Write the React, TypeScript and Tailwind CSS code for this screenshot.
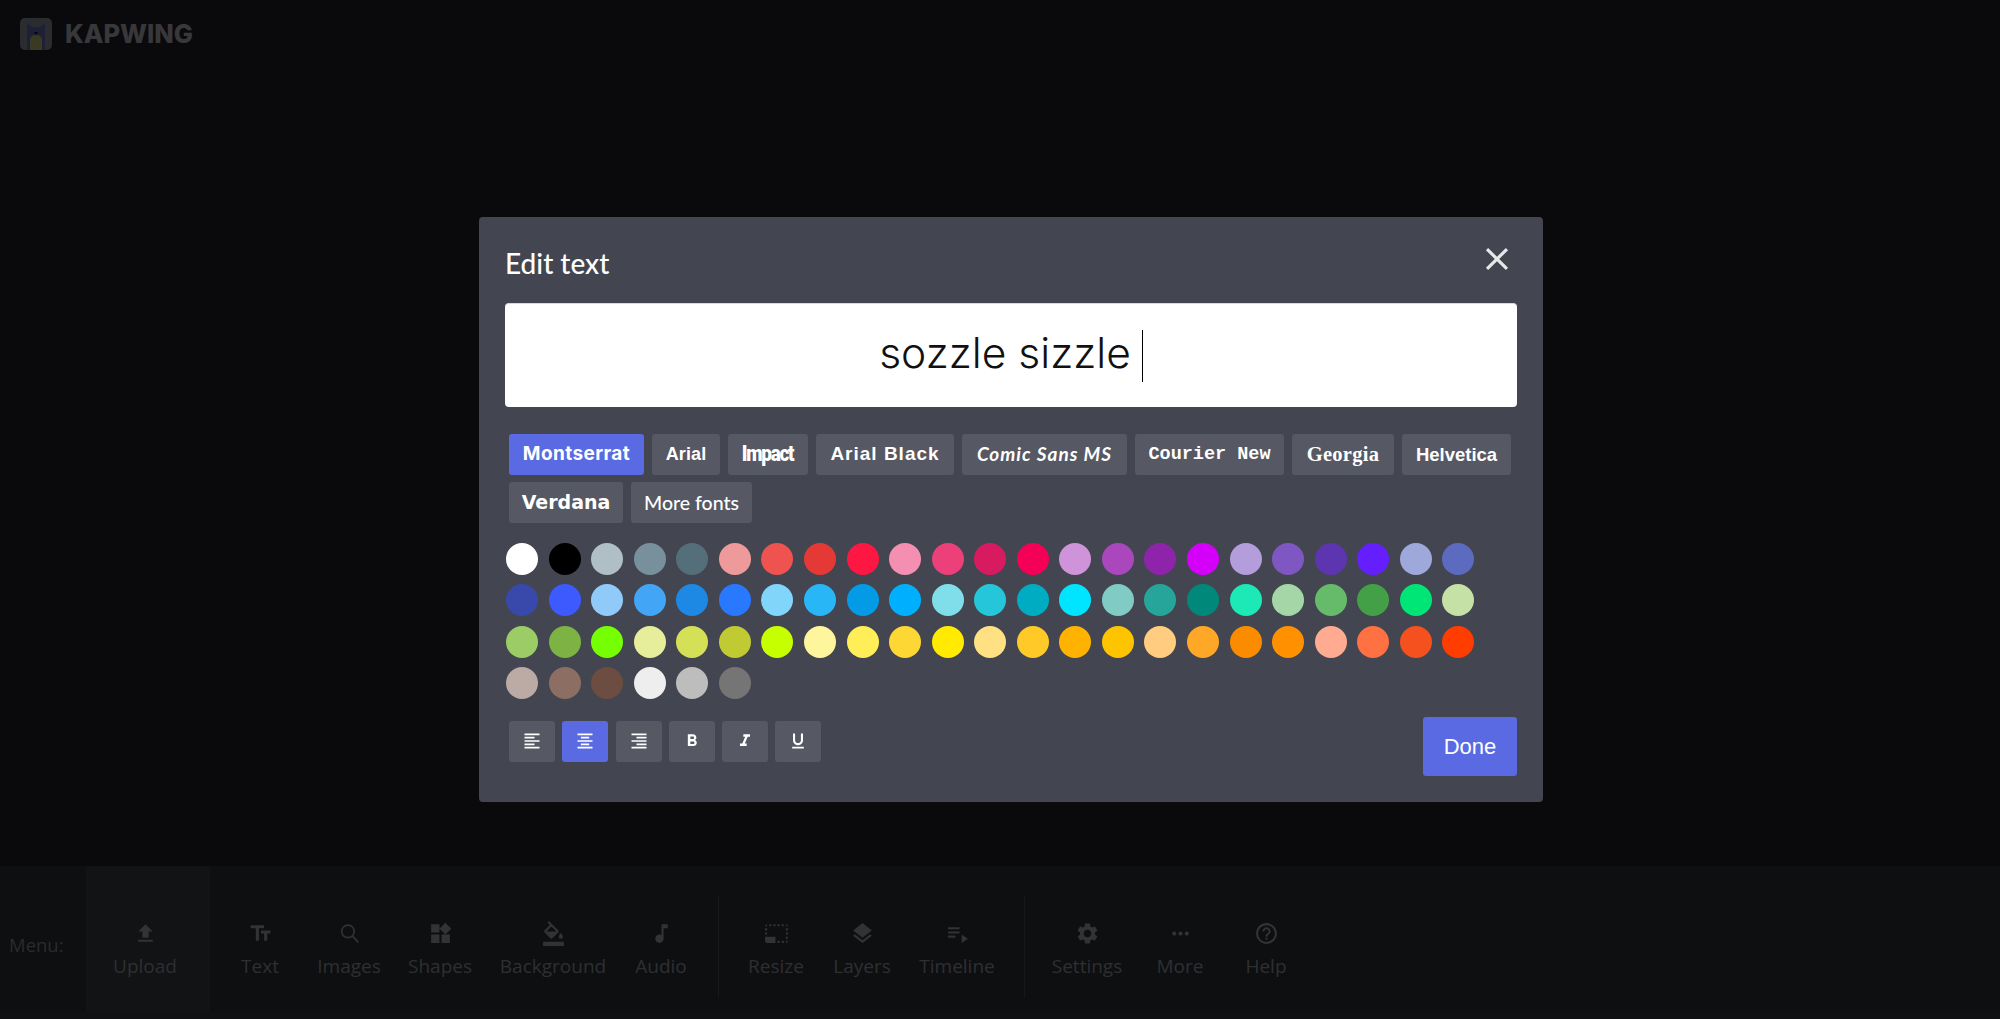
import {
  MdClose,
  MdFileUpload,
  MdFormatAlignCenter,
  MdFormatAlignLeft,
  MdFormatAlignRight,
  MdFormatBold,
  MdFormatColorFill,
  MdFormatItalic,
  MdFormatUnderlined,
  MdHelpOutline,
  MdLayers,
  MdMoreHoriz,
  MdMusicNote,
  MdPhotoSizeSelectSmall,
  MdPlaylistPlay,
  MdSettings,
  MdTextFields,
  MdWidgets,
} from "react-icons/md";
import type { ComponentType, ReactNode } from "react";

const fonts = [
  { label: "Montserrat", width: "w-[135px]", cls: "font-['Inter',sans-serif] font-bold text-[19px] tracking-[0.4px]", active: true },
  { label: "Arial", width: "w-[68px]", cls: "font-['Liberation_Sans',sans-serif] font-bold text-[18px] tracking-[0.1px]" },
  { label: "Impact", width: "w-[80px]", cls: "font-['Roboto',sans-serif] font-black text-[21px] tracking-[-1.4px] scale-x-[0.9] scale-y-[1.08]" },
  { label: "Arial Black", width: "w-[138px]", cls: "font-['Liberation_Sans',sans-serif] font-bold text-[19px] tracking-[1px]" },
  { label: "Comic Sans MS", width: "w-[165px]", cls: "font-['Lato',sans-serif] italic font-bold text-[19px] tracking-[1px]" },
  { label: "Courier New", width: "w-[149px]", cls: "font-['Liberation_Mono',monospace] font-bold text-[18.5px]" },
  { label: "Georgia", width: "w-[102px]", cls: "font-['Liberation_Serif',serif] font-bold text-[20.5px] tracking-[0.3px]" },
  { label: "Helvetica", width: "w-[109px]", cls: "font-['Liberation_Sans',sans-serif] font-bold text-[18.5px]" },
  { label: "Verdana", width: "w-[114px]", cls: "font-['DejaVu_Sans',sans-serif] font-bold text-[19px]" },
  { label: "More fonts", width: "w-[121px]", cls: "font-['Lato',sans-serif] font-medium text-[19.5px]" },
];

const swatches = [
  "bg-[#ffffff]", "bg-[#000000]", "bg-[#b0bec5]", "bg-[#78909c]", "bg-[#546e7a]", "bg-[#ef9a9a]", "bg-[#ef5350]", "bg-[#e53935]",
  "bg-[#ff1744]", "bg-[#f48fb1]", "bg-[#ec407a]", "bg-[#d81b60]", "bg-[#f50057]", "bg-[#ce93d8]", "bg-[#ab47bc]", "bg-[#8e24aa]",
  "bg-[#d500f9]", "bg-[#b39ddb]", "bg-[#7e57c2]", "bg-[#5e35b1]", "bg-[#651fff]", "bg-[#9fa8da]", "bg-[#5c6bc0]",
  "bg-[#3949ab]", "bg-[#3d5afe]", "bg-[#90caf9]", "bg-[#42a5f5]", "bg-[#1e88e5]", "bg-[#2979ff]", "bg-[#81d4fa]", "bg-[#29b6f6]",
  "bg-[#039be5]", "bg-[#00b0ff]", "bg-[#80deea]", "bg-[#26c6da]", "bg-[#00acc1]", "bg-[#00e5ff]", "bg-[#80cbc4]", "bg-[#26a69a]",
  "bg-[#00897b]", "bg-[#1de9b6]", "bg-[#a5d6a7]", "bg-[#66bb6a]", "bg-[#43a047]", "bg-[#00e676]", "bg-[#c5e1a5]",
  "bg-[#9ccc65]", "bg-[#7cb342]", "bg-[#76ff03]", "bg-[#e6ee9c]", "bg-[#d4e157]", "bg-[#c0ca33]", "bg-[#c6ff00]", "bg-[#fff59d]",
  "bg-[#ffee58]", "bg-[#fdd835]", "bg-[#ffea00]", "bg-[#ffe082]", "bg-[#ffca28]", "bg-[#ffb300]", "bg-[#ffc400]", "bg-[#ffcc80]",
  "bg-[#ffa726]", "bg-[#fb8c00]", "bg-[#ff9100]", "bg-[#ffab91]", "bg-[#ff7043]", "bg-[#f4511e]", "bg-[#ff3d00]",
  "bg-[#bcaaa4]", "bg-[#8d6e63]", "bg-[#6d4c41]", "bg-[#eeeeee]", "bg-[#bdbdbd]", "bg-[#757575]",
];

const formatButtons = [
  { icon: MdFormatAlignLeft },
  { icon: MdFormatAlignCenter, active: true },
  { icon: MdFormatAlignRight },
  { icon: MdFormatBold },
  { icon: MdFormatItalic },
  { icon: MdFormatUnderlined },
];

function SearchIcon({ className }: { className?: string }) {
  return (
    <svg viewBox="0 0 24 24" fill="none" stroke="currentColor" strokeWidth="1.6" className={className} width="1em" height="1em">
      <circle cx="10.5" cy="10" r="6" />
      <path d="M15 14.5l5.5 6" />
    </svg>
  );
}

type Tool = { label: string; icon: ComponentType<{ className?: string }>; width: string; active?: boolean };

const leftTools: Tool[] = [
  { label: "Upload", icon: MdFileUpload, width: "w-[124px]", active: true },
  { label: "Text", icon: MdTextFields, width: "w-[100px]" },
  { label: "Images", icon: SearchIcon, width: "w-[78px]" },
  { label: "Shapes", icon: MdWidgets, width: "w-[104px]" },
  { label: "Background", icon: MdFormatColorFill, width: "w-[122px]" },
  { label: "Audio", icon: MdMusicNote, width: "w-[94px]" },
];
const midTools: Tool[] = [
  { label: "Resize", icon: MdPhotoSizeSelectSmall, width: "w-[98px]" },
  { label: "Layers", icon: MdLayers, width: "w-[74px]" },
  { label: "Timeline", icon: MdPlaylistPlay, width: "w-[116px]" },
];
const rightTools: Tool[] = [
  { label: "Settings", icon: MdSettings, width: "w-[114px]" },
  { label: "More", icon: MdMoreHoriz, width: "w-[72px]" },
  { label: "Help", icon: MdHelpOutline, width: "w-[100px]" },
];

function ToolItem({ tool }: { tool: Tool }) {
  const Icon = tool.icon;
  return (
    <div className={`${tool.width} flex h-full flex-col items-center pt-[55px] ${tool.active ? "bg-[#121315] pr-[6px]" : ""}`}>
      <Icon className="text-[25px] text-[#323335]" />
      <span className="mt-[7px] text-[19px] leading-[26px] text-[#2e2f31]">{tool.label}</span>
    </div>
  );
}

function Divider({ className }: { className: string }) {
  return <div className={`mt-[30px] h-[102px] w-px bg-[#17181a] ${className}`} />;
}

function KapwingLogo() {
  return (
    <svg viewBox="0 0 32 32" width="32" height="32">
      <rect width="32" height="32" rx="5" fill="#2b2c30" />
      <path d="M7 32V5l5 4h8l5-4v27z" fill="#1d2036" />
      <path d="M10 32V22q0-5 6-5t6 5v10z" fill="#3a3a22" />
      <path d="M14 14h4l-2 3z" fill="#08080a" />
    </svg>
  );
}

function Chip({ children, className }: { children: ReactNode; className: string }) {
  return <div className={`flex items-center justify-center rounded-[3px] text-white ${className}`}>{children}</div>;
}

export default function App() {
  return (
    <div className="relative flex h-screen w-full flex-col overflow-hidden bg-[#0a0a0d] font-['Open_Sans',sans-serif]">
      <header className="flex h-[68px] items-start pl-[20px] pt-[18px]">
        <KapwingLogo />
        <span className="ml-[13px] mt-[6px] font-['Inter',sans-serif] text-[25.5px] font-extrabold leading-[20px] text-[#38383b]">
          KAPWING
        </span>
      </header>
      <main className="flex-1" />
      <nav className="flex h-[146px] items-stretch bg-[#0e0f11]">
        <span className="w-[86px] pl-[9px] pt-[66px] text-[18.5px] leading-[26px] text-[#2a2b2d]">Menu:</span>
        {leftTools.map((t) => <ToolItem key={t.label} tool={t} />)}
        <Divider className="ml-[10px] mr-[8px]" />
        {midTools.map((t) => <ToolItem key={t.label} tool={t} />)}
        <Divider className="ml-[9px] mr-[5px]" />
        {rightTools.map((t) => <ToolItem key={t.label} tool={t} />)}
      </nav>
      <div className="h-[7px] bg-[#101113]" />

      <div className="absolute inset-0 flex items-center justify-center pl-[22px]">
        <div className="h-[585px] w-[1064px] rounded-[4px] bg-[#434651] px-[26px]">
          <div className="flex h-[86px] items-start justify-between">
            <h2 className="mt-[28px] font-['Lato',sans-serif] text-[28px] font-medium leading-[36px] text-white">Edit text</h2>
            <MdClose className="mr-[1px] mt-[23px] text-[38px] text-[#e8e8e8]" />
          </div>
          <div className="flex h-[104px] items-center justify-center rounded-[4px] border-t border-[#d8d9de] bg-white">
            <span className="mb-[4px] font-['Inter',sans-serif] text-[42.5px] font-light leading-none text-[#111]">sozzle sizzle</span>
            <span className="ml-[11px] h-[52px] w-px bg-black" />
          </div>
          <div className="mt-[27px] flex flex-wrap gap-x-2 gap-y-[7px] pl-[4px]">
            {fonts.map((f) => (
              <Chip key={f.label} className={`h-[41px] ${f.width} ${f.active ? "bg-[#5a6ae2]" : "bg-[#565863]"}`}>
                <span className={`inline-block whitespace-nowrap ${f.cls}`}>{f.label}</span>
              </Chip>
            ))}
          </div>
          <div className="mt-[20px] grid grid-cols-[repeat(23,32px)] gap-x-[10.57px] gap-y-[9.3px] pl-[1px]">
            {swatches.map((c, i) => (
              <div key={i} className={`h-[32px] w-[32px] rounded-full ${c}`} />
            ))}
          </div>
          <div className="mt-[18px] flex items-start justify-between">
            <div className="ml-[4px] mt-[4px] flex gap-[7.3px]">
              {formatButtons.map((b, i) => {
                const Icon = b.icon;
                return (
                  <Chip key={i} className={`h-[41px] w-[46px] ${b.active ? "bg-[#5a6ae2]" : "bg-[#565863]"}`}>
                    <Icon className="text-[20px]" />
                  </Chip>
                );
              })}
            </div>
            <button className="h-[59px] w-[94px] rounded-[3px] bg-[#5a6ae2] font-['Liberation_Sans',sans-serif] text-[22px] text-white">
              Done
            </button>
          </div>
        </div>
      </div>
    </div>
  );
}
